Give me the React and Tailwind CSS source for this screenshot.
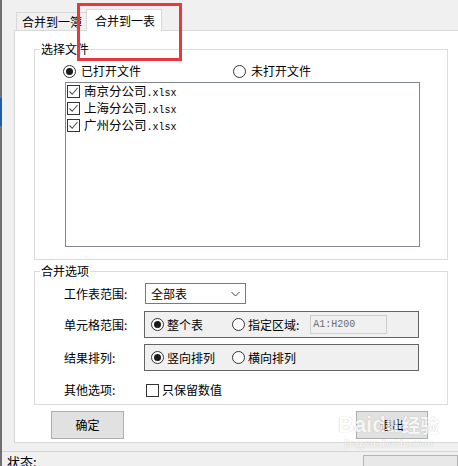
import React from "react";

function Radio({ checked }) {
  return (
    <span className="w-[13px] h-[13px] rounded-full border border-[#333333] bg-white flex items-center justify-center shrink-0">
      {checked && <span className="w-[7px] h-[7px] rounded-full bg-[#1a1a1a]" />}
    </span>
  );
}

function Check({ checked }) {
  return (
    <span className="w-[13px] h-[13px] border border-[#333333] bg-white flex items-center justify-center shrink-0">
      {checked && (
        <svg width="11" height="11" viewBox="0 0 11 11">
          <path d="M1.5 5.5 L4.2 8.3 L9.5 2" stroke="#4d4d4d" strokeWidth="1.1" fill="none" />
        </svg>
      )}
    </span>
  );
}

function FileItem({ name }) {
  return (
    <div className="h-[17px] flex items-center gap-[4px] shrink-0">
      <Check checked />
      <span className="text-[12.5px] leading-[17px] whitespace-nowrap">
        {name}
        <span className="font-['Liberation_Mono',monospace] text-[10px]">.xlsx</span>
      </span>
    </div>
  );
}

export default function App() {
  return (
    <div className="w-[458px] h-[466px] bg-[#f0f0f0] relative overflow-hidden flex font-['Noto_Sans_CJK_SC',sans-serif] text-[12px] text-black">
      <div className="w-[2px] bg-[#707070] flex flex-col shrink-0">
        <div className="h-[98px]" />
        <div className="h-[28px] bg-[#1f5fa8]" />
      </div>
      <div className="flex-1 flex flex-col min-w-0">
        {/* tab strip */}
        <div className="h-[30px] flex items-end pl-[14px] shrink-0">
          <div className="w-[72px] h-[18px] border border-b-0 border-[#d9d9d9] bg-[#f0f0f0] pl-[5px] overflow-hidden whitespace-nowrap leading-[17px]">
            合并到一簿
          </div>
          <div className="relative z-10 -ml-[2px] -mb-[1px] w-[76px] h-[22px] border border-b-0 border-[#d9d9d9] bg-white pl-[8px] leading-[21px] whitespace-nowrap">
            合并到一表
          </div>
        </div>

        {/* tab panel */}
        <div className="ml-[12px] w-[460px] h-[413px] shrink-0 border border-[#d9d9d9] bg-white flex flex-col pl-[19px] pt-[11px]">
          <fieldset className="w-[414px] h-[218px] border border-[#dcdcdc] flex flex-col">
            <legend className="ml-[5px] px-[1px] leading-[14px]">选择文件</legend>
            <div className="mt-[8px] h-[14px] flex items-center pl-[28px]">
              <div className="w-[170px] flex items-center gap-[5px]">
                <Radio checked />
                <span className="leading-[14px]">已打开文件</span>
              </div>
              <div className="flex items-center gap-[5px]">
                <Radio />
                <span className="leading-[14px]">未打开文件</span>
              </div>
            </div>
            <div className="ml-[30px] mt-[4px] w-[355px] h-[165px] border border-[#828790] bg-white pl-[1px] flex flex-col">
              <FileItem name="南京分公司" />
              <FileItem name="上海分公司" />
              <FileItem name="广州分公司" />
            </div>
          </fieldset>

          <fieldset className="mt-[4px] w-[414px] h-[141px] border border-[#dcdcdc] flex flex-col">
            <legend className="ml-[5px] px-[1px] leading-[14px]">合并选项</legend>
            <div className="flex flex-col pl-[29px]">
              <div className="mt-[5px] h-[21px] flex items-center">
                <span className="w-[81px]">工作表范围:</span>
                <div className="w-[101px] h-[21px] border border-[#7a7a7a] bg-white flex items-center justify-between pl-[5px] pr-[5px]">
                  <span>全部表</span>
                  <svg width="9" height="6" viewBox="0 0 9 6">
                    <path d="M0.5 1 L4.5 5 L8.5 1" stroke="#444" strokeWidth="1" fill="none" />
                  </svg>
                </div>
              </div>
              <div className="mt-[7px] h-[27px] flex items-center">
                <span className="w-[80px]">单元格范围:</span>
                <div className="w-[275px] h-[27px] border border-[#646464] bg-[#f0f0f0] flex items-center pl-[6px]">
                  <div className="w-[81px] flex items-center gap-[3px]">
                    <Radio checked />
                    <span>整个表</span>
                  </div>
                  <div className="flex items-center gap-[3px]">
                    <Radio />
                    <span>指定区域:</span>
                  </div>
                  <div className="ml-[11px] w-[77px] h-[19px] border border-[#cfcfcf] bg-[#f0f0f0] flex items-center pl-[2px] text-[#6d6d6d] font-['Liberation_Mono',monospace] text-[10px]">
                    A1:H200
                  </div>
                </div>
              </div>
              <div className="mt-[6px] h-[27px] flex items-center">
                <span className="w-[80px]">结果排列:</span>
                <div className="w-[275px] h-[27px] border border-[#646464] bg-[#f0f0f0] flex items-center pl-[6px]">
                  <div className="w-[81px] flex items-center gap-[3px]">
                    <Radio checked />
                    <span>竖向排列</span>
                  </div>
                  <div className="flex items-center gap-[3px]">
                    <Radio />
                    <span>横向排列</span>
                  </div>
                </div>
              </div>
              <div className="mt-[12px] h-[14px] flex items-center">
                <span className="w-[82px]">其他选项:</span>
                <div className="flex items-center gap-[3px]">
                  <Check />
                  <span>只保留数值</span>
                </div>
              </div>
            </div>
          </fieldset>

          <div className="mt-[6px] flex pl-[17px]">
            <div className="w-[73px] h-[28px] border border-[#adadad] bg-[#e1e1e1] flex items-center justify-center">确定</div>
            <div className="ml-[232px] w-[72px] h-[28px] border border-[#adadad] bg-[#e1e1e1] flex items-center justify-center">退出</div>
          </div>
        </div>

        {/* status bar */}
        <div className="mt-[8px] flex-1 border-t border-[#d5d5d5] flex">
          <span className="pl-[5px] pt-[2px] text-[13px] leading-[16px]">状态:</span>
          <div className="ml-auto mt-[3px] w-[95px] border border-[#b5b5b5] bg-[#e8e8e8]" />
        </div>
      </div>

      {/* red highlight rectangle */}
      <div className="absolute left-[77px] top-[3px] w-[105px] h-[58px] border-[3px] border-[#e8383d]" />

      {/* watermark */}
      <div className="absolute left-[338px] top-[413px] flex flex-col items-center text-white opacity-70 pointer-events-none">
        <div className="flex items-end font-['Liberation_Sans',sans-serif] font-bold text-[22px] leading-[24px] [text-shadow:0_0_1px_#9a9a9a]">
          <span>Bai</span>
          <span>du</span>
          <span className="font-['Noto_Sans_CJK_SC',sans-serif] text-[19px] ml-[2px]">经验</span>
        </div>
        <div className="font-['Liberation_Sans',sans-serif] text-[11px] leading-[12px] [text-shadow:0_0_1px_#9a9a9a]">jingyan.baidu.com</div>
      </div>
    </div>
  );
}
